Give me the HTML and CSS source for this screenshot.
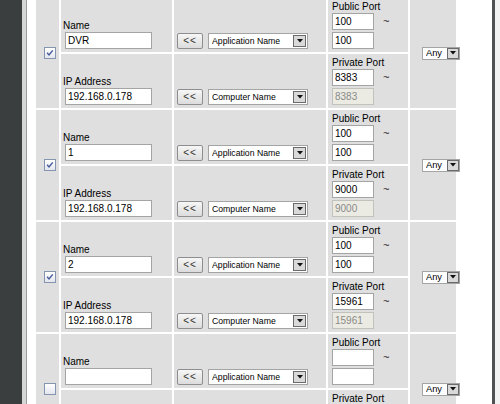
FILE: index.html
```html
<!DOCTYPE html>
<html>
<head>
<meta charset="utf-8">
<link rel="stylesheet" href="styles.css">
</head>
<body>
<div class="page">
  <div class="sidebar"></div>
  <div class="edge"></div>
  <div class="edge-line"></div>
  <div class="main">
    <table class="rules">
      <colgroup>
        <col class="col-chk"><col class="col-name"><col class="col-pick"><col class="col-port"><col class="col-proto">
      </colgroup>
      <tbody>
        <!-- Entry 1 -->
        <tr>
          <td class="c-chk" rowspan="2"><span class="chk"><svg viewBox="0 0 12 12" width="10" height="10"><path d="M2.5 5.8 L4.8 8.3 L9.3 2.8" fill="none" stroke="#44599a" stroke-width="1.7"/></svg></span></td>
          <td class="c-name"><div class="lbl">Name</div><input class="inp w-name" type="text" value="DVR"></td>
          <td class="c-pick"><div class="pick"><button class="btn">&lt;&lt;</button><span class="sel w-app"><span class="sel-t">Application Name</span><span class="arr"><svg viewBox="0 0 6 4" width="6" height="4"><path d="M0 0H6L3 3.5Z" fill="#111"/></svg></span></span></div></td>
          <td class="c-port"><div class="lbl">Public Port</div><div class="prow"><input class="inp w-port" type="text" value="100"><span class="tilde">~</span></div><input class="inp w-port" type="text" value="100"></td>
          <td class="c-proto" rowspan="2"><span class="sel w-any"><span class="sel-t">Any</span><span class="arr"><svg viewBox="0 0 6 4" width="6" height="4"><path d="M0 0H6L3 3.5Z" fill="#111"/></svg></span></span></td>
        </tr>
        <tr>
          <td class="c-name"><div class="lbl">IP Address</div><input class="inp w-name" type="text" value="192.168.0.178"></td>
          <td class="c-pick"><div class="pick"><button class="btn">&lt;&lt;</button><span class="sel w-app"><span class="sel-t">Computer Name</span><span class="arr"><svg viewBox="0 0 6 4" width="6" height="4"><path d="M0 0H6L3 3.5Z" fill="#111"/></svg></span></span></div></td>
          <td class="c-port"><div class="lbl">Private Port</div><div class="prow"><input class="inp w-port" type="text" value="8383"><span class="tilde">~</span></div><input class="inp w-port" type="text" value="8383" disabled></td>
        </tr>
        <!-- Entry 2 -->
        <tr>
          <td class="c-chk" rowspan="2"><span class="chk"><svg viewBox="0 0 12 12" width="10" height="10"><path d="M2.5 5.8 L4.8 8.3 L9.3 2.8" fill="none" stroke="#44599a" stroke-width="1.7"/></svg></span></td>
          <td class="c-name"><div class="lbl">Name</div><input class="inp w-name" type="text" value="1"></td>
          <td class="c-pick"><div class="pick"><button class="btn">&lt;&lt;</button><span class="sel w-app"><span class="sel-t">Application Name</span><span class="arr"><svg viewBox="0 0 6 4" width="6" height="4"><path d="M0 0H6L3 3.5Z" fill="#111"/></svg></span></span></div></td>
          <td class="c-port"><div class="lbl">Public Port</div><div class="prow"><input class="inp w-port" type="text" value="100"><span class="tilde">~</span></div><input class="inp w-port" type="text" value="100"></td>
          <td class="c-proto" rowspan="2"><span class="sel w-any"><span class="sel-t">Any</span><span class="arr"><svg viewBox="0 0 6 4" width="6" height="4"><path d="M0 0H6L3 3.5Z" fill="#111"/></svg></span></span></td>
        </tr>
        <tr>
          <td class="c-name"><div class="lbl">IP Address</div><input class="inp w-name" type="text" value="192.168.0.178"></td>
          <td class="c-pick"><div class="pick"><button class="btn">&lt;&lt;</button><span class="sel w-app"><span class="sel-t">Computer Name</span><span class="arr"><svg viewBox="0 0 6 4" width="6" height="4"><path d="M0 0H6L3 3.5Z" fill="#111"/></svg></span></span></div></td>
          <td class="c-port"><div class="lbl">Private Port</div><div class="prow"><input class="inp w-port" type="text" value="9000"><span class="tilde">~</span></div><input class="inp w-port" type="text" value="9000" disabled></td>
        </tr>
        <!-- Entry 3 -->
        <tr>
          <td class="c-chk" rowspan="2"><span class="chk"><svg viewBox="0 0 12 12" width="10" height="10"><path d="M2.5 5.8 L4.8 8.3 L9.3 2.8" fill="none" stroke="#44599a" stroke-width="1.7"/></svg></span></td>
          <td class="c-name"><div class="lbl">Name</div><input class="inp w-name" type="text" value="2"></td>
          <td class="c-pick"><div class="pick"><button class="btn">&lt;&lt;</button><span class="sel w-app"><span class="sel-t">Application Name</span><span class="arr"><svg viewBox="0 0 6 4" width="6" height="4"><path d="M0 0H6L3 3.5Z" fill="#111"/></svg></span></span></div></td>
          <td class="c-port"><div class="lbl">Public Port</div><div class="prow"><input class="inp w-port" type="text" value="100"><span class="tilde">~</span></div><input class="inp w-port" type="text" value="100"></td>
          <td class="c-proto" rowspan="2"><span class="sel w-any"><span class="sel-t">Any</span><span class="arr"><svg viewBox="0 0 6 4" width="6" height="4"><path d="M0 0H6L3 3.5Z" fill="#111"/></svg></span></span></td>
        </tr>
        <tr>
          <td class="c-name"><div class="lbl">IP Address</div><input class="inp w-name" type="text" value="192.168.0.178"></td>
          <td class="c-pick"><div class="pick"><button class="btn">&lt;&lt;</button><span class="sel w-app"><span class="sel-t">Computer Name</span><span class="arr"><svg viewBox="0 0 6 4" width="6" height="4"><path d="M0 0H6L3 3.5Z" fill="#111"/></svg></span></span></div></td>
          <td class="c-port"><div class="lbl">Private Port</div><div class="prow"><input class="inp w-port" type="text" value="15961"><span class="tilde">~</span></div><input class="inp w-port" type="text" value="15961" disabled></td>
        </tr>
        <!-- Entry 4 -->
        <tr>
          <td class="c-chk" rowspan="2"><span class="chk"></span></td>
          <td class="c-name"><div class="lbl">Name</div><input class="inp w-name" type="text" value=""></td>
          <td class="c-pick"><div class="pick"><button class="btn">&lt;&lt;</button><span class="sel w-app"><span class="sel-t">Application Name</span><span class="arr"><svg viewBox="0 0 6 4" width="6" height="4"><path d="M0 0H6L3 3.5Z" fill="#111"/></svg></span></span></div></td>
          <td class="c-port"><div class="lbl">Public Port</div><div class="prow"><input class="inp w-port" type="text" value=""><span class="tilde">~</span></div><input class="inp w-port" type="text" value=""></td>
          <td class="c-proto" rowspan="2"><span class="sel w-any"><span class="sel-t">Any</span><span class="arr"><svg viewBox="0 0 6 4" width="6" height="4"><path d="M0 0H6L3 3.5Z" fill="#111"/></svg></span></span></td>
        </tr>
        <tr>
          <td class="c-name"><div class="lbl">IP Address</div><input class="inp w-name" type="text" value=""></td>
          <td class="c-pick"><div class="pick"><button class="btn">&lt;&lt;</button><span class="sel w-app"><span class="sel-t">Computer Name</span><span class="arr"><svg viewBox="0 0 6 4" width="6" height="4"><path d="M0 0H6L3 3.5Z" fill="#111"/></svg></span></span></div></td>
          <td class="c-port"><div class="lbl">Private Port</div><div class="prow"><input class="inp w-port" type="text" value=""><span class="tilde">~</span></div><input class="inp w-port" type="text" value="" disabled></td>
        </tr>
      </tbody>
    </table>
  </div>
  <div class="rline"></div>
  <div class="rpad"></div>
</div>
</body>
</html>
```

FILE: styles.css
```css
html, body {
  margin: 0;
  padding: 0;
  background: #ffffff;
}

body {
  font-family: "Liberation Sans", Arial, sans-serif;
  color: #000;
}

.page {
  display: flex;
  height: 404px;
  overflow: hidden;
  background: #ffffff;
}

.sidebar {
  flex: none;
  width: 22px;
  background: #3a3e3e;
}

.edge {
  flex: none;
  width: 4px;
  background: #d5d7d7;
}

.edge-line {
  flex: none;
  width: 1px;
  background: #9c9c9c;
}

.main {
  flex: 1;
  padding-left: 7px;
  background: #ffffff;
}

.rline {
  flex: none;
  width: 3px;
  background: #4e5252;
}

.rpad {
  flex: none;
  width: 5px;
  background: #f2f2f2;
}

.rules {
  margin-top: -4px;
  border-collapse: separate;
  border-spacing: 2px;
  table-layout: fixed;
  width: 424px;
  background: #ffffff;
}

.col-chk { width: 23px; }
.col-name { width: 111px; }
.col-pick { width: 152px; }
.col-port { width: 80px; }
.col-proto { width: 46px; }

.rules td {
  background: #dfdfdf;
  height: 54px;
  box-sizing: border-box;
  padding: 0;
  vertical-align: bottom;
}

.rules td.c-chk {
  vertical-align: middle;
  padding-left: 8px;
}

.rules td.c-name {
  padding: 0 0 3px 2px;
}

.rules td.c-pick {
  padding: 0 0 3px 3px;
}

.rules td.c-port {
  padding: 0 0 3px 4px;
}

.rules td.c-proto {
  vertical-align: middle;
  padding-left: 12px;
}

.lbl {
  font-size: 10px;
  line-height: 12px;
  color: #000;
  white-space: nowrap;
}

.inp {
  display: block;
  box-sizing: border-box;
  height: 17px;
  margin: 0;
  padding: 0 2px;
  border: 1px solid #a4a4a4;
  background: #ffffff;
  font-family: "Liberation Sans", Arial, sans-serif;
  font-size: 10px;
  color: #000;
  outline: none;
}

.inp:disabled {
  background: #ebebe4;
  border-color: #c2c2bc;
  color: #8a8a86;
}

.w-name {
  width: 87px;
  margin-left: 2px;
}

.w-port {
  width: 42px;
}

.prow {
  display: flex;
  align-items: center;
  margin-bottom: 2px;
}

.tilde {
  margin-left: 9px;
  font-size: 11px;
  line-height: 11px;
  color: #222;
}

.pick {
  display: flex;
  align-items: flex-end;
}

.btn {
  box-sizing: border-box;
  width: 26px;
  height: 16px;
  margin: 0;
  padding: 0;
  border: 1px solid #8e8e8e;
  border-radius: 2px;
  background: linear-gradient(#f6f6f6, #dcdcdc);
  font-family: "Liberation Sans", Arial, sans-serif;
  font-size: 10px;
  line-height: 14px;
  letter-spacing: 1px;
  color: #333;
}

.sel {
  display: flex;
  align-items: center;
  box-sizing: border-box;
  border: 1px solid #a4a4a4;
  background: #ffffff;
  padding-left: 3px;
  white-space: nowrap;
}

.sel-t {
  flex: 1;
  overflow: hidden;
}

.w-app {
  width: 100px;
  height: 16px;
  margin-left: 5px;
  font-size: 8.7px;
}

.w-any {
  width: 38px;
  height: 13px;
  font-size: 9.3px;
}

.arr {
  flex: none;
  display: flex;
  align-items: center;
  justify-content: center;
  box-sizing: border-box;
  width: 13px;
  height: 12px;
  margin-right: 1px;
  border: 1px solid #6a6a6a;
  background: #d9d9d9;
}

.w-any .arr {
  width: 12px;
  height: 11px;
  margin-right: 0;
}

.chk {
  display: flex;
  align-items: center;
  justify-content: center;
  box-sizing: border-box;
  width: 12px;
  height: 12px;
  border: 1px solid #8495b0;
  background: linear-gradient(#ffffff, #e3e6ee);
}
```
